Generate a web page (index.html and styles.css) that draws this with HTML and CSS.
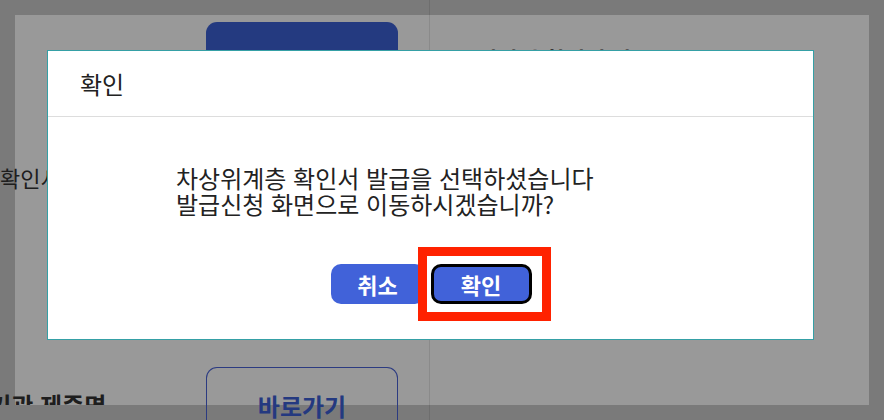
FILE: index.html
```html
<!DOCTYPE html>
<html lang="ko">
<head>
  <meta charset="UTF-8" />
  <meta name="viewport" content="width=device-width, initial-scale=1.0"/>
  <title>증명서 발급</title>
  <link rel="stylesheet" href="styles.css">
</head>
<body>
  <div class="page">
    <div class="col-label">
      <p class="label label-first">확인서</p>
      <p class="label label-second">국가기관 제증명</p>
    </div>
    <div class="col-btn">
      <a class="go go-fill">발급신청</a>
      <a class="go go-line">바로가기</a>
    </div>
    <div class="col-info">
      <p class="info-title">차상위 확인서 발급</p>
    </div>
  </div>
  <div class="divider"></div>

  <div class="backdrop"></div>
  <div class="modal" role="dialog">
    <div class="modal-head">확인</div>
    <div class="modal-body">
      <p class="message">차상위계층 확인서 발급을 선택하셨습니다<br/>발급신청 화면으로 이동하시겠습니까?</p>
      <div class="actions">
        <button type="button" class="btn btn-cancel">취소</button>
        <span class="mark">
          <button type="button" class="btn btn-ok">확인</button>
        </span>
      </div>
    </div>
  </div>
</body>
</html>
```

FILE: styles.css
```css
html, body {
  margin: 0;
  height: 100%;
  overflow: hidden;
}
body {
  background: #cbcbcb;
  font-family: "Noto Sans CJK KR", "Noto Sans", sans-serif;
  color: #222;
}
.page {
  margin: 15px;
  height: 390px;
  background: #fff;
  display: flex;
}
.col-label {
  width: 206px;
  flex: none;
  margin-left: -15px;
  overflow: hidden;
}
.label {
  margin: 0;
  font-size: 22px;
  line-height: 26px;
  color: #333;
  white-space: nowrap;
}
.label-first {
  margin-top: 149px;
}
.label-second {
  margin-top: 202px;
  margin-left: -55px;
  font-size: 24px;
  font-weight: bold;
}
.col-btn {
  width: 192px;
  flex: none;
  display: flex;
  flex-direction: column;
}
.go {
  display: block;
  flex: none;
  box-sizing: border-box;
  border-radius: 11px;
  font-size: 24px;
  font-weight: bold;
  text-align: center;
}
.go-fill {
  margin-top: 7px;
  height: 90px;
  padding-top: 22px;
  background: #3d61d5;
  color: #fff;
}
.go-line {
  margin-top: 255px;
  height: 53px;
  padding-top: 20px;
  border: 1px solid #4a63d8;
  border-bottom: none;
  border-radius: 11px 11px 0 0;
  color: #3d5fd6;
}
.col-info {
  flex: 1;
  padding-left: 80px;
}
.info-title {
  margin: 27px 0 0;
  font-size: 22px;
  font-weight: bold;
  color: #333;
}
.divider {
  position: fixed;
  top: 0;
  bottom: 0;
  left: 429px;
  width: 1px;
  background: rgba(0, 0, 0, 0.1);
}
.backdrop {
  position: fixed;
  inset: 0;
  background: rgba(0, 0, 0, 0.4);
}
.modal {
  position: fixed;
  left: 47px;
  top: 50px;
  width: 767px;
  height: 290px;
  box-sizing: border-box;
  background: #fff;
  border: 1px solid #35a0a6;
}
.modal-head {
  height: 65px;
  padding-left: 32px;
  font-size: 24px;
  line-height: 65px;
  color: #222;
  border-bottom: 1px solid #dddddd;
}
.modal-body {
  padding-top: 48px;
}
.message {
  margin: 0;
  padding-left: 128px;
  font-size: 24px;
  line-height: 26px;
  color: #222;
}
.actions {
  margin-top: 47px;
  display: flex;
  justify-content: center;
  gap: 6px;
  padding-left: 1px;
}
.btn {
  height: 40px;
  box-sizing: border-box;
  border: none;
  border-radius: 10px;
  background: #4162d9;
  color: #fff;
  font-family: inherit;
  font-size: 22px;
  font-weight: bold;
  padding: 0;
}
.btn-cancel {
  width: 94px;
}
.btn-ok {
  width: 101px;
  border: 3px solid #000;
}
.mark {
  position: relative;
  display: block;
}
.mark::after {
  content: "";
  position: absolute;
  left: -13px;
  right: -19px;
  top: -17px;
  bottom: -17px;
  border: 9px solid #ff2200;
}
```
